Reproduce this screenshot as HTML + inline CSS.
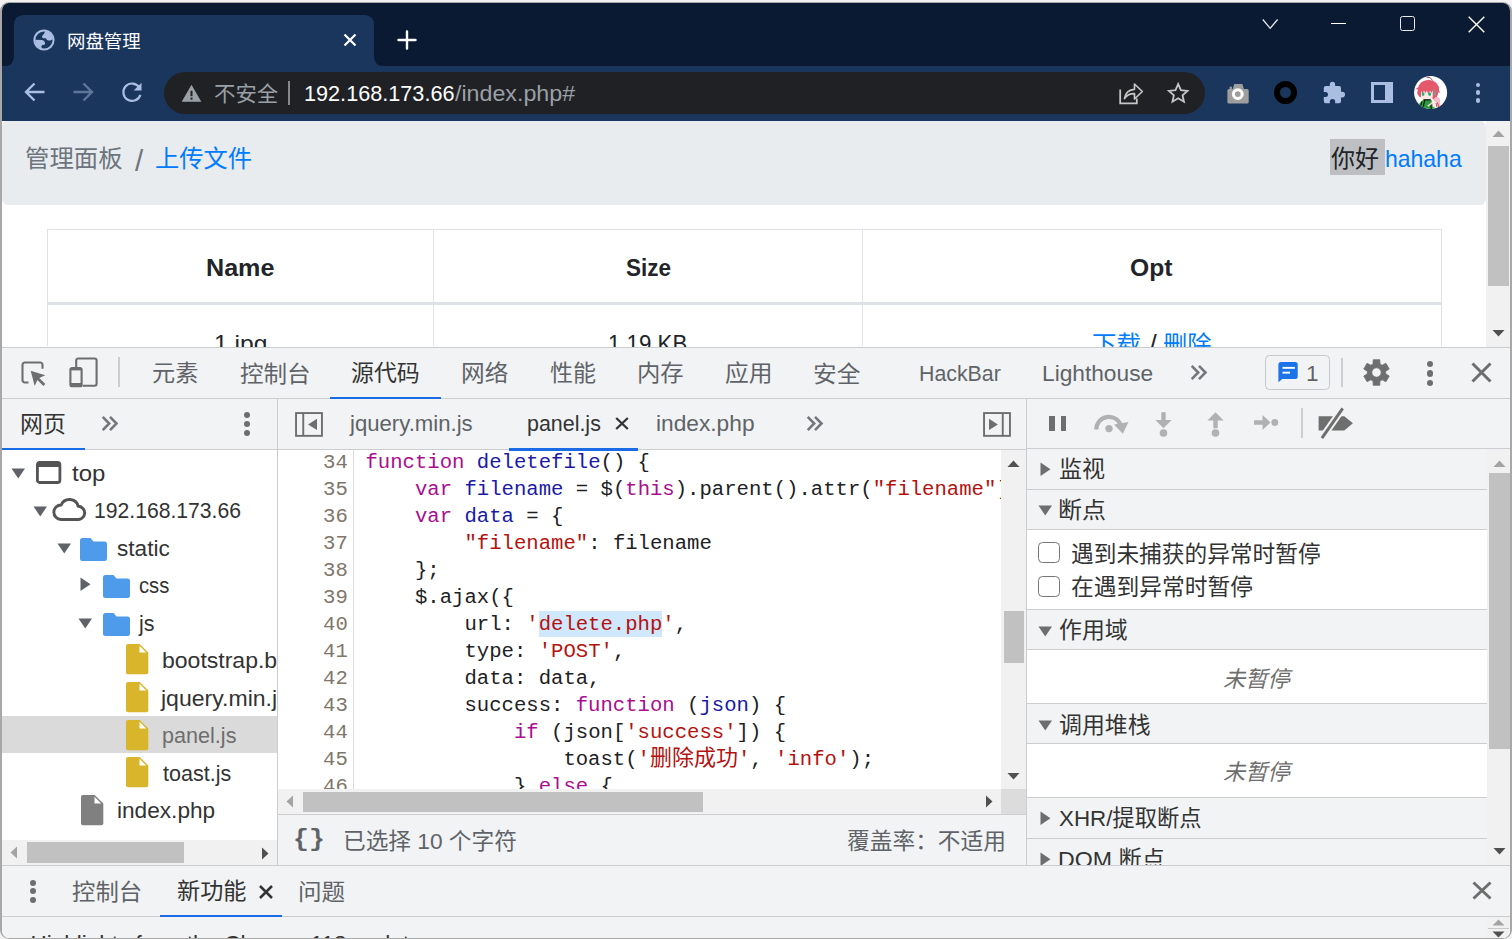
<!DOCTYPE html>
<html lang="zh-CN"><head><meta charset="utf-8"><title>网盘管理</title>
<style>
html,body{margin:0;padding:0;width:1512px;height:939px;overflow:hidden;background:#f2f2f2;}
body{position:relative;font-family:"Liberation Sans","Noto Sans CJK SC",sans-serif;}
.a{position:absolute;}
.t{position:absolute;white-space:nowrap;line-height:1;transform-origin:0 50%;}
.m{font-family:"Liberation Mono","Noto Sans CJK SC",monospace;}
.b{font-weight:bold;}
.bl{display:inline-block;width:0;height:0;}
.i{font-style:italic;}
#win{position:absolute;left:0;top:2px;width:1508px;height:935px;border:1px solid #a8a8a8;border-left-width:2px;border-right-width:2px;border-radius:9px;overflow:hidden;background:#fff;}
#in{position:absolute;left:-2px;top:-3px;width:1512px;height:939px;}
.cj{font-size:22px;line-height:0}
.k{color:#aa0d91}.d{color:#1a1aa6}.s{color:#b5120f}
/*CAL*/
</style></head><body>
<div id="win"><div id="in">
<div class="a" style="left:0px;top:0px;width:1512px;height:66px;background:#0a1a33;"></div>
<div class="a" style="left:0px;top:66px;width:1512px;height:55px;background:#1b365d;"></div>
<svg class="a" style="left:0px;top:15px;" width="400" height="51" viewBox="0 0 400 51"><path d="M2 51 L4 51 Q14 51 14 41 L14 10 Q14 0 24 0 L364 0 Q374 0 374 10 L374 41 Q374 51 384 51 Z" fill="#1b365d"/></svg>
<svg class="a" style="left:33px;top:29px;" width="22" height="22" viewBox="0 0 22 22"><defs><clipPath id="gc"><circle cx="11" cy="11" r="9"/></clipPath></defs><circle cx="11" cy="11" r="10.600" fill="#a9bee1"/><circle cx="11" cy="11" r="8.600" fill="#1b365d"/><g clip-path="url(#gc)" fill="#a9bee1"><path d="M11.700 3.300Q11.500 5 9.700 6.200Q8.800 7.300 9.100 8.300Q9.400 9.100 10.400 9.150L12.700 9.300Q13.300 9.700 13.750 10.700Q14.500 11.500 15.500 11.550L17.500 11.550Q18.500 11.300 19.300 10.600L22 10V0H11.700z"/><path d="M2.500 10.850L8.600 11Q10.300 11.200 11 12Q12 12.900 12.050 14.100Q12.200 15.200 11.800 15.500Q11 15.950 10 15.960Q8.900 16.200 8.600 16.800Q8.300 17.600 8.500 18.200Q8.900 19 9.700 19.400L9.700 22H0V10.850z"/></g></svg>
<span id="tabtitle" class="t " style="left:66.88px;top:33.10px;font-size:18.6px;color:#ffffff;transform:scaleX(0.9890);">网盘管理</span>
<svg class="a" style="left:343px;top:33px;" width="14" height="14" viewBox="0 0 14 14"><path d="M1.5 1.5L12.500 12.500M12.500 1.500L1.500 12.500" stroke="#fff" stroke-width="2.2" fill="none"/></svg>
<svg class="a" style="left:397px;top:30px;" width="20" height="20" viewBox="0 0 20 20"><path d="M10 1.500V18.500M1.500 10H18.500" stroke="#fff" stroke-width="2.4" stroke-linecap="round" fill="none"/></svg>
<svg class="a" style="left:1260px;top:17px;" width="22" height="14" viewBox="0 0 22 14"><path d="M2.800 2.500L10.200 11.300L17.600 2.500" stroke="#e8eaed" stroke-width="1.300" fill="none"/></svg>
<div class="a" style="left:1331px;top:23px;width:15px;height:1.3px;background:#ffffff;"></div>
<div class="a" style="left:1400px;top:16px;width:12.600px;height:13.200px;border:1.300px solid #e8eaed;border-radius:2.500px"></div>
<svg class="a" style="left:1468px;top:16px;" width="17" height="17" viewBox="0 0 17 17"><path d="M.7.7L16.300 16.300M16.300.7L.7 16.300" stroke="#fff" stroke-width="1.400" fill="none"/></svg>
<svg class="a" style="left:24px;top:82px;" width="22" height="20" viewBox="0 0 22 20"><path d="M20.500 10H2.500M10.500 1.500L2 10l8.500 8.500" stroke="#a9bee1" stroke-width="2.400" fill="none"/></svg>
<svg class="a" style="left:72px;top:82px;" width="22" height="20" viewBox="0 0 22 20"><path d="M1.500 10H19.500M11.500 1.500L20 10l-8.500 8.500" stroke="#5f769b" stroke-width="2.400" fill="none"/></svg>
<svg class="a" style="left:120px;top:81px;" width="24" height="23" viewBox="0 0 24 23"><path d="M19.200 6.200A8.700 8.700 0 1 0 20.400 13.800" stroke="#a9bee1" stroke-width="2.200" fill="none"/><path d="M21.500 1.800V9.600H13.700z" fill="#a9bee1"/></svg>
<div class="a" style="left:164px;top:72px;width:1041px;height:42px;border-radius:21px;background:#202124"></div>
<svg class="a" style="left:181px;top:84px;" width="21" height="19" viewBox="0 0 21 19"><path d="M10.500.800L20.300 17.800H.7z" fill="#9aa0a6"/><rect x="9.500" y="6.800" width="2" height="5.400" fill="#202124"/><rect x="9.500" y="13.600" width="2" height="2" fill="#202124"/></svg>
<span id="insecure" class="t " style="left:214.24px;top:82.80px;font-size:21px;color:#9aa0a6;transform:scaleX(1.0192);">不安全</span>
<div class="a" style="left:288px;top:81px;width:2px;height:24px;background:#85888c;"></div>
<span id="urlhost" class="t " style="left:303.80px;top:83.71px;font-size:21.5px;color:#ffffff;transform:scaleX(1.0068);">192.168.173.66</span>
<span id="urlpath" class="t " style="left:454.80px;top:83.71px;font-size:21.5px;color:#9aa0a6;transform:scaleX(1.0800);">/index.php#</span>
<svg class="a" style="left:1119px;top:81.8px;" width="25" height="23" viewBox="0 0 25 23"><path d="M1.200 7.500V21.300H17.800V16.500" stroke="#c4c7c5" stroke-width="1.800" fill="none"/><path d="M5.500 16.500C6.500 10.500 10.500 7.600 15.500 7.300V2L23.300 9.500L15.500 17V11.700C11.500 11.600 8 13 5.500 16.500z" stroke="#c4c7c5" stroke-width="1.700" fill="none" stroke-linejoin="round"/></svg>
<svg class="a" style="left:1166px;top:81px;" width="24" height="24" viewBox="0 0 24 24"><path d="M12 2.200l3 6.800 7.300.7-5.500 4.900 1.600 7.200L12 18l-6.400 3.800 1.600-7.200L1.700 9.700 9 9z" stroke="#c4c7c5" stroke-width="2" fill="none" stroke-linejoin="miter" transform="translate(12.200,11.900) scale(.9) translate(-12,-12)"/></svg>
<svg class="a" style="left:1226px;top:83px;" width="24" height="22" viewBox="0 0 24 22"><path d="M2.900 6H6.700L8.300 .9H16.300L17.900 6H21.200A1.500 1.500 0 0 1 22.700 7.500V19A1.500 1.500 0 0 1 21.200 20.500H2.900A1.500 1.500 0 0 1 1.400 19V7.500A1.500 1.500 0 0 1 2.900 6z" fill="#9e9e9e"/><rect x="3.600" y="3.700" width="2.300" height="3" fill="#9e9e9e"/><circle cx="11.800" cy="11.100" r="4.400" fill="#9e9e9e" stroke="#fff" stroke-width="3.100"/></svg>
<div class="a" style="left:1274px;top:81px;width:11px;height:11px;border:6.500px solid #000;border-radius:50%"></div>
<svg class="a" style="left:1322px;top:80px;" width="25" height="25" viewBox="0 0 25 25"><path d="M3.800 6H7.850V4.450a2.650 2.650 0 0 1 5.300 0V6H17a2 2 0 0 1 2 2V11.800h1.200a2.800 2.800 0 0 1 0 5.600H19V21.200a2 2 0 0 1-2 2H13.150V21.700a2.650 2.650 0 0 0-5.300 0V23.200H3.800a2 2 0 0 1-2-2V17h1.700a2.500 2.500 0 0 0 0-5H1.800V8a2 2 0 0 1 2-2z" fill="#a9bee1"/></svg>
<div class="a" style="left:1371.300px;top:82px;width:10.400px;height:15px;border:3px solid #a9bee1;border-left-width:3.300px;border-right-width:8px"></div>
<svg class="a" style="left:1414px;top:75.9px;" width="34" height="34" viewBox="0 0 34 34"><defs><clipPath id="avc"><circle cx="16.600" cy="16.500" r="16.550"/></clipPath></defs><circle cx="16.600" cy="16.500" r="16.550" fill="#fff"/><g clip-path="url(#avc)"><path d="M12.500 1.200Q16.500 .3 18.700 4.600" fill="none" stroke="#a23a48" stroke-width=".9"/><path d="M1.200 13.200L4.200 11.300Q6 5.500 12 4.300Q19 3.300 23 7.800Q25.500 10.500 25 14L26 17.200L24.300 16.300Q24 19 22.500 21.500L21 25L18.300 22.500L18.500 15L7.500 15L7.200 21.500L5 20.500L3.200 17.500L3.800 13.200z" fill="#e4596c"/><path d="M7 14.500H18.500V20.500Q18.500 23.400 15.500 23.400H10Q7 23.400 7 20.500z" fill="#fdeae2"/><path d="M6.500 13.500L8.500 18L10 14.500L11.300 17.300L12.800 14.500L14.500 18.500L16 14.500L17.500 17L19 13z" fill="#e4596c"/><rect x="7.800" y="16.400" width="2.600" height="3.300" rx="1" fill="#1db37b"/><rect x="14.300" y="16.400" width="2.700" height="3.300" rx="1" fill="#1db37b"/><path d="M19.700 13.500l1.800 1.200.5 3-1 2.500-1.300-1z" fill="#8d8f98"/><path d="M5 28L8.500 24.200L12.500 23.300L17 23.500L20.500 27L20.500 34H7z" fill="#2c9a3d"/><path d="M8 25.500L6.500 30M10.800 24L9 31.500M16.800 27.500L17.300 33" stroke="#0c1a10" stroke-width="1.100"/><path d="M9 23.300h8l-1 1.100H10z" fill="#15171a"/><path d="M17.500 24.500Q19 22.500 20.300 24L22 30L19 31.500z" fill="#fdeae2"/><path d="M13.300 29.500L17.800 26.300L18.600 27.500L14.200 30.700z" fill="#f6d6e0"/><path d="M20 22.300Q22.500 20.300 25 21.500Q26.800 23.500 26 25.500Q27 28 25.800 30.500L23.500 30Q23.200 26.500 20.800 25.500z" fill="#f4bccb"/><path d="M23.300 26.500L25 31.500M22 27L23 31" stroke="#c4383f" stroke-width=".9"/></g></svg>
<div class="a" style="left:1475.600px;top:82.6px;width:4.800px;height:4.800px;border-radius:50%;background:#a9bee1"></div>
<div class="a" style="left:1475.600px;top:90.3px;width:4.800px;height:4.800px;border-radius:50%;background:#a9bee1"></div>
<div class="a" style="left:1475.600px;top:97.89999999999999px;width:4.800px;height:4.800px;border-radius:50%;background:#a9bee1"></div>
<div class="a" style="left:2px;top:121px;width:1508px;height:226px;background:#ffffff;"></div>
<div class="a" style="left:2px;top:121px;width:1484px;height:83.500px;background:#e9ecef;border-radius:5px 6px 6px 6px"></div>
<span id="bc1" class="t " style="left:25.00px;top:147.00px;font-size:24px;color:#6c757d;transform:scaleX(1.0163);">管理面板</span>
<span id="bcsep" class="t " style="left:135.00px;top:146.20px;font-size:29.5px;color:#6c757d;">/</span>
<span id="bc2" class="t " style="left:155.00px;top:147.00px;font-size:24px;color:#007bff;transform:scaleX(1.0106);">上传文件</span>
<div class="a" style="left:1330px;top:139px;width:55px;height:36px;background:#bebfc2;"></div>
<span id="hello" class="t " style="left:1331.00px;top:147.00px;font-size:24px;color:#212529;">你好</span>
<span id="user" class="t " style="left:1384.80px;top:147.21px;font-size:24px;color:#007bff;transform:scaleX(0.9575);">hahaha</span>
<div class="a" style="left:47px;top:229px;width:1395px;height:1px;background:#dee2e6;"></div>
<div class="a" style="left:47px;top:229px;width:1px;height:117px;background:#dee2e6;"></div>
<div class="a" style="left:433px;top:229px;width:1px;height:117px;background:#e1e4e8;"></div>
<div class="a" style="left:862px;top:229px;width:1px;height:117px;background:#e1e4e8;"></div>
<div class="a" style="left:1441px;top:229px;width:1px;height:117px;background:#dee2e6;"></div>
<div class="a" style="left:47px;top:302px;width:1395px;height:3px;background:#dee2e6;"></div>
<span id="thname" class="t b" style="left:206.00px;top:255.71px;font-size:24px;color:#212529;transform:scaleX(1.0465);">Name</span>
<span id="thsize" class="t b" style="left:625.52px;top:255.71px;font-size:24px;color:#212529;transform:scaleX(0.9352);">Size</span>
<span id="thopt" class="t b" style="left:1130.00px;top:255.71px;font-size:24px;color:#212529;transform:scaleX(1.0250);">Opt</span>
<span id="td1" class="t " style="left:213.76px;top:331.81px;font-size:24px;color:#212529;transform:scaleX(1.0256);">1.jpg</span>
<span id="td2" class="t " style="left:608.00px;top:331.81px;font-size:24px;color:#212529;transform:scaleX(0.9288);">1.19 KB</span>
<span id="td3a" class="t " style="left:1091.98px;top:332.60px;font-size:24px;color:#007bff;transform:scaleX(1.0164);">下载</span>
<span id="td3s" class="t " style="left:1149.46px;top:330.80px;font-size:26px;color:#212529;">/</span>
<span id="td3b" class="t " style="left:1162.76px;top:332.60px;font-size:24px;color:#007bff;transform:scaleX(1.0127);">删除</span>
<div class="a" style="left:1486px;top:121px;width:24px;height:226px;background:#f1f1f1;"></div>
<div class="a" style="left:1488px;top:146px;width:21px;height:140px;background:#c1c1c1;"></div>
<svg class="a" style="left:1491px;top:129px;" width="15" height="9" viewBox="0 0 15 9"><path d="M7.500 1.500L13.500 8H1.500z" fill="#a3a3a3"/></svg>
<svg class="a" style="left:1491px;top:329px;" width="15" height="9" viewBox="0 0 15 9"><path d="M7.500 7.500L13.500 1H1.500z" fill="#505050"/></svg>
<div class="a" style="left:2px;top:347px;width:1508px;height:592px;background:#f1f3f4;"></div>
<div class="a" style="left:2px;top:347px;width:1508px;height:1px;background:#cbcdd1;"></div>
<div class="a" style="left:2px;top:398px;width:1508px;height:1px;background:#cbcdd1;"></div>
<svg class="a" style="left:20.6px;top:361px;" width="26" height="26" viewBox="0 0 26 26"><path d="M7.500 21.500H3.700a2.200 2.200 0 0 1-2.200-2.200V3.700a2.200 2.200 0 0 1 2.200-2.200H19.300a2.200 2.200 0 0 1 2.200 2.200V7.800" stroke="#6e6e6e" stroke-width="2.100" fill="none"/><path d="M9.700 9.800L24.300 14.300l-6 2.700 6 6-1.900 1.900-6-6-2.700 6z" fill="#6e6e6e"/></svg>
<svg class="a" style="left:69px;top:357px;" width="30" height="31" viewBox="0 0 30 31"><path d="M7.200 10V3.500a2 2 0 0 1 2-2H25.600a2 2 0 0 1 2 2V26.800a2 2 0 0 1-2 2H13.500" stroke="#6e6e6e" stroke-width="2.100" fill="none"/><rect x="1.400" y="11" width="11.200" height="18.200" rx="1.800" stroke="#6e6e6e" stroke-width="2.100" fill="#f1f3f4"/><rect x="1.400" y="11" width="11.200" height="2.400" fill="#6e6e6e"/><rect x="1.400" y="26" width="11.200" height="3.200" fill="#6e6e6e"/></svg>
<div class="a" style="left:118px;top:357px;width:2px;height:30px;background:#cbcdd1;"></div>
<span id="mt0" class="t " style="left:151.76px;top:363.10px;font-size:22.5px;color:#5f6368;transform:scaleX(1.0281);">元素</span>
<span id="mt1" class="t " style="left:239.76px;top:363.60px;font-size:22.5px;color:#5f6368;transform:scaleX(1.0464);">控制台</span>
<span id="mt2" class="t " style="left:351.04px;top:362.60px;font-size:22.5px;color:#333333;transform:scaleX(1.0180);">源代码</span>
<span id="mt3" class="t " style="left:460.72px;top:363.10px;font-size:22.5px;color:#5f6368;transform:scaleX(1.0525);">网络</span>
<span id="mt4" class="t " style="left:550.00px;top:363.10px;font-size:22.5px;color:#5f6368;transform:scaleX(1.0233);">性能</span>
<span id="mt5" class="t " style="left:637.00px;top:363.10px;font-size:22.5px;color:#5f6368;transform:scaleX(1.0385);">内存</span>
<span id="mt6" class="t " style="left:725.48px;top:363.10px;font-size:22.5px;color:#5f6368;transform:scaleX(1.0573);">应用</span>
<span id="mt7" class="t " style="left:812.80px;top:364.10px;font-size:22.5px;color:#5f6368;transform:scaleX(1.0514);">安全</span>
<span id="mthack" class="t " style="left:918.80px;top:362.81px;font-size:22.5px;color:#5f6368;transform:scaleX(0.9476);">HackBar</span>
<span id="mtlh" class="t " style="left:1042.00px;top:362.81px;font-size:22.5px;color:#5f6368;transform:scaleX(1.0093);">Lighthouse</span>
<div class="a" style="left:330px;top:397px;width:111px;height:2px;background:#1a6ce6;"></div>
<svg class="a" style="left:1189.7px;top:364.2px;" width="19" height="17" viewBox="0 0 19 17"><path d="M1.700 1.900L8.200 8.500L1.700 15.100M9 1.900L15.500 8.500L9 15.100" stroke="#74777b" stroke-width="2.600" fill="none"/></svg>
<div class="a" style="left:1265px;top:355px;width:65px;height:35px;border:1px solid #c6cacd;border-radius:4.500px;box-sizing:border-box"></div>
<svg class="a" style="left:1278px;top:361.9px;" width="20" height="21" viewBox="0 0 20 21"><path d="M2.500 0H17.200A2.500 2.500 0 0 1 19.700 2.500V14.400A2.500 2.500 0 0 1 17.200 16.900H4.200L.4 20.300V2.500A2.500 2.500 0 0 1 2.500 0z" fill="#1a73e8"/><rect x="4.500" y="4.900" width="12.400" height="1.900" fill="#fff"/><rect x="4.500" y="9.700" width="7.500" height="1.900" fill="#fff"/></svg>
<span id="issues1" class="t " style="left:1306.00px;top:362.91px;font-size:22.5px;color:#5f6368;">1</span>
<div class="a" style="left:1341px;top:357.5px;width:2px;height:29.5px;background:#cbcdd1;"></div>
<svg class="a" style="left:1362px;top:357.9px;" width="29" height="29" viewBox="0 0 29 29"><path fill="#6e6e6e" fill-rule="evenodd" stroke="#6e6e6e" stroke-width=".8" stroke-linejoin="round" d="M11.05 5.97L11.19 1.72L17.81 1.72L17.95 5.97L20.16 7.25L23.91 5.25L27.22 10.97L23.61 13.22L23.61 15.78L27.22 18.03L23.91 23.75L20.16 21.75L17.95 23.03L17.81 27.28L11.19 27.28L11.05 23.03L8.84 21.75L5.09 23.75L1.78 18.03L5.39 15.78L5.39 13.22L1.78 10.97L5.09 5.25L8.84 7.25zM14.500 9.800a4.700 4.700 0 1 0 0 9.400 4.700 4.700 0 0 0 0-9.400z"/></svg>
<div class="a" style="left:1426.900px;top:360.75px;width:6.200px;height:6.200px;border-radius:50%;background:#6e6e6e"></div>
<div class="a" style="left:1426.900px;top:370.4px;width:6.200px;height:6.200px;border-radius:50%;background:#6e6e6e"></div>
<div class="a" style="left:1426.900px;top:379.79999999999995px;width:6.200px;height:6.200px;border-radius:50%;background:#6e6e6e"></div>
<svg class="a" style="left:1471px;top:362px;" width="21" height="21" viewBox="0 0 21 21"><path d="M1.500 1.500L19.500 19.500M19.500 1.500L1.500 19.500" stroke="#6e6e6e" stroke-width="3" fill="none"/></svg>
<div class="a" style="left:2px;top:449px;width:1025px;height:1px;background:#cbcdd1;"></div>
<div class="a" style="left:1027px;top:448px;width:483px;height:1px;background:#cbcdd1;"></div>
<span id="nav1" class="t " style="left:19.52px;top:413.65px;font-size:22.5px;color:#333333;transform:scaleX(1.0202);">网页</span>
<svg class="a" style="left:100.5px;top:414.9px;" width="19" height="17" viewBox="0 0 19 17"><path d="M1.700 1.900L8.200 8.500L1.700 15.100M9 1.900L15.500 8.500L9 15.100" stroke="#74777b" stroke-width="2.600" fill="none"/></svg>
<div class="a" style="left:244.300px;top:412px;width:6px;height:6px;border-radius:50%;background:#6e6e6e"></div>
<div class="a" style="left:244.300px;top:421.3px;width:6px;height:6px;border-radius:50%;background:#6e6e6e"></div>
<div class="a" style="left:244.300px;top:430.4px;width:6px;height:6px;border-radius:50%;background:#6e6e6e"></div>
<div class="a" style="left:2px;top:448px;width:83px;height:2px;background:#1a6ce6;"></div>
<div class="a" style="left:277px;top:399px;width:1px;height:466px;background:#cbcdd1;"></div>
<div class="a" style="left:1026px;top:399px;width:1px;height:466px;background:#cbcdd1;"></div>
<svg class="a" style="left:295px;top:412px;" width="28" height="25" viewBox="0 0 28 25"><rect x="1.050" y="1.050" width="25.900" height="22.800" fill="none" stroke="#6e6e6e" stroke-width="1.900"/><path d="M8.250 1V24" stroke="#6e6e6e" stroke-width="1.900"/><path d="M22 6.700V18.100L13.100 12.400z" fill="#6e6e6e"/></svg>
<span id="ft1" class="t " style="left:350.00px;top:413.41px;font-size:22.5px;color:#5f6368;transform:scaleX(0.9840);">jquery.min.js</span>
<span id="ft2" class="t " style="left:527.00px;top:413.41px;font-size:22.5px;color:#333333;transform:scaleX(0.9522);">panel.js</span>
<svg class="a" style="left:614.5px;top:417px;" width="14" height="13" viewBox="0 0 14 13"><path d="M1.200 1L12.800 12M12.800 1L1.200 12" stroke="#333" stroke-width="2.300" fill="none"/></svg>
<span id="ft3" class="t " style="left:655.52px;top:413.41px;font-size:22.5px;color:#5f6368;transform:scaleX(1.0096);">index.php</span>
<svg class="a" style="left:805.6px;top:414.7px;" width="19" height="17" viewBox="0 0 19 17"><path d="M1.700 1.900L8.200 8.500L1.700 15.100M9 1.900L15.500 8.500L9 15.100" stroke="#74777b" stroke-width="2.600" fill="none"/></svg>
<svg class="a" style="left:983px;top:412px;" width="28" height="25" viewBox="0 0 28 25"><rect x="1.050" y="1.050" width="25.900" height="22.800" fill="none" stroke="#6e6e6e" stroke-width="1.900"/><path d="M19.750 1V24" stroke="#6e6e6e" stroke-width="1.900"/><path d="M6 6.700V18.100L14.900 12.400z" fill="#6e6e6e"/></svg>
<div class="a" style="left:1049px;top:416px;width:5.8px;height:15px;background:#6e6e6e;"></div>
<div class="a" style="left:1060.5px;top:416px;width:5.8px;height:15px;background:#6e6e6e;"></div>
<svg class="a" style="left:1093px;top:413px;" width="37" height="21" viewBox="0 0 37 21"><path d="M3.300 16.500A12.600 12.600 0 0 1 27.500 11.500" stroke="#b1b1b1" stroke-width="4.200" fill="none"/><path d="M35.500 9L29.800 20.800L21 11.500z" fill="#b1b1b1"/><circle cx="16" cy="15.600" r="3.700" fill="#b1b1b1"/></svg>
<svg class="a" style="left:1153px;top:410.5px;" width="21" height="26" viewBox="0 0 21 26"><path d="M8.300 1.200h4.400v7.800h5.900L10.500 17.300 2.400 9h5.900z" fill="#b1b1b1"/><circle cx="10.500" cy="22" r="3.800" fill="#b1b1b1"/></svg>
<svg class="a" style="left:1205px;top:410.5px;" width="21" height="26" viewBox="0 0 21 26"><path d="M8.300 17.300h4.400V9.500h5.900L10.500 1.200 2.400 9.500h5.900z" fill="#b1b1b1"/><circle cx="10.500" cy="22" r="3.800" fill="#b1b1b1"/></svg>
<svg class="a" style="left:1253px;top:413px;" width="27" height="19" viewBox="0 0 27 19"><path d="M1 7.300h8.500V2l8 7.500-8 7.500v-5.300H1z" fill="#b1b1b1"/><circle cx="21.800" cy="9.500" r="3.400" fill="#b1b1b1"/></svg>
<div class="a" style="left:1301px;top:408px;width:2px;height:29.5px;background:#cbcdd1;"></div>
<svg class="a" style="left:1317px;top:406px;" width="38" height="35" viewBox="0 0 38 35"><path d="M1.600 10.200H27.300L35.900 17.300 27.300 24.400H1.600z" fill="#6e6e6e"/><path d="M4.200 33L26.300 1.500" stroke="#f1f3f4" stroke-width="7"/><path d="M4.900 32.200L25.700 2.300" stroke="#6e6e6e" stroke-width="3"/></svg>
<div class="a" style="left:2px;top:450px;width:275px;height:390px;background:#ffffff;"></div>
<div class="a" style="left:2px;top:716px;width:275px;height:36.8px;background:#dadada;"></div>
<svg class="a" style="left:11px;top:468px;" width="15" height="11" viewBox="0 0 15 11"><path d="M.5 .5H14L7.250 10.500z" fill="#5f6368"/></svg>
<svg class="a" style="left:35.8px;top:461px;" width="26" height="23" viewBox="0 0 26 23"><rect x="1.400" y="1.400" width="22.500" height="20.100" rx="2.300" fill="none" stroke="#545454" stroke-width="2.800"/><rect x="1.400" y="1.400" width="22.500" height="4.600" fill="#545454"/></svg>
<span id="tr0" class="t " style="left:72.04px;top:462.60px;font-size:22.5px;color:#333333;transform:scaleX(1.0640);">top</span>
<svg class="a" style="left:33px;top:506px;" width="15" height="11" viewBox="0 0 15 11"><path d="M.5 .5H14L7.250 10.500z" fill="#5f6368"/></svg>
<svg class="a" style="left:51px;top:497px;" width="38" height="26" viewBox="0 0 38 26"><path d="M10 22.450A7.250 7.250 0 0 1 10.200 7.950A9 9 0 0 1 27.200 9.300A6.600 6.600 0 0 1 27.850 22.450z" fill="none" stroke="#545454" stroke-width="2.900" stroke-linejoin="round"/></svg>
<span id="tr1" class="t " style="left:94.12px;top:500.10px;font-size:22.5px;color:#333333;transform:scaleX(0.9396);">192.168.173.66</span>
<svg class="a" style="left:56.5px;top:543px;" width="15" height="11" viewBox="0 0 15 11"><path d="M.5 .5H14L7.250 10.500z" fill="#5f6368"/></svg>
<svg class="a" style="left:80.2px;top:538px;" width="27" height="23" viewBox="0 0 27 23"><path d="M2.500 0H10.500L13.500 3.500H24.500A2.500 2.500 0 0 1 27 6V20.500A2.500 2.500 0 0 1 24.500 23H2.500A2.500 2.500 0 0 1 0 20.500V2.500A2.500 2.500 0 0 1 2.500 0z" fill="#4e9aeb"/></svg>
<span id="tr2" class="t " style="left:116.84px;top:537.60px;font-size:22.5px;color:#333333;transform:scaleX(1.0044);">static</span>
<svg class="a" style="left:79.8px;top:577.3px;" width="11" height="15" viewBox="0 0 11 15"><path d="M.5 .5V14L10.500 7.250z" fill="#5f6368"/></svg>
<svg class="a" style="left:103px;top:574.6px;" width="27" height="23" viewBox="0 0 27 23"><path d="M2.500 0H10.500L13.500 3.500H24.500A2.500 2.500 0 0 1 27 6V20.500A2.500 2.500 0 0 1 24.500 23H2.500A2.500 2.500 0 0 1 0 20.500V2.500A2.500 2.500 0 0 1 2.500 0z" fill="#4e9aeb"/></svg>
<span id="tr3" class="t " style="left:138.88px;top:575.10px;font-size:22.5px;color:#333333;transform:scaleX(0.8992);">css</span>
<svg class="a" style="left:78.2px;top:618px;" width="15" height="11" viewBox="0 0 15 11"><path d="M.5 .5H14L7.250 10.500z" fill="#5f6368"/></svg>
<svg class="a" style="left:103px;top:613px;" width="27" height="23" viewBox="0 0 27 23"><path d="M2.500 0H10.500L13.500 3.500H24.500A2.500 2.500 0 0 1 27 6V20.500A2.500 2.500 0 0 1 24.500 23H2.500A2.500 2.500 0 0 1 0 20.500V2.500A2.500 2.500 0 0 1 2.500 0z" fill="#4e9aeb"/></svg>
<span id="tr4" class="t " style="left:138.80px;top:612.60px;font-size:22.5px;color:#333333;transform:scaleX(0.9527);">js</span>
<svg class="a" style="left:126px;top:644.4px;" width="23" height="31" viewBox="0 0 23 31"><path d="M2 0H13.700L22.300 8.600V28.200A2 2 0 0 1 20.300 30.200H2A2 2 0 0 1 0 28.200V2A2 2 0 0 1 2 0z" fill="#d9b52b"/><path d="M13.500 1.800V8.500H20.200z" fill="#fff"/></svg>
<span id="tr5" class="t " style="left:161.80px;top:650.10px;font-size:22.5px;color:#333333;transform:scaleX(1.0230);">bootstrap.b</span>
<svg class="a" style="left:126px;top:682px;" width="23" height="31" viewBox="0 0 23 31"><path d="M2 0H13.700L22.300 8.600V28.200A2 2 0 0 1 20.300 30.200H2A2 2 0 0 1 0 28.200V2A2 2 0 0 1 2 0z" fill="#d9b52b"/><path d="M13.500 1.800V8.500H20.200z" fill="#fff"/></svg>
<span id="tr6" class="t " style="left:160.96px;top:687.60px;font-size:22.5px;color:#333333;transform:scaleX(1.0245);">jquery.min.j</span>
<svg class="a" style="left:126px;top:719.5px;" width="23" height="31" viewBox="0 0 23 31"><path d="M2 0H13.700L22.300 8.600V28.200A2 2 0 0 1 20.300 30.200H2A2 2 0 0 1 0 28.200V2A2 2 0 0 1 2 0z" fill="#d9b52b"/><path d="M13.500 1.800V8.500H20.200z" fill="#fff"/></svg>
<span id="tr7" class="t " style="left:161.80px;top:725.10px;font-size:22.5px;color:#6e6e6e;transform:scaleX(0.9602);">panel.js</span>
<svg class="a" style="left:126px;top:757px;" width="23" height="31" viewBox="0 0 23 31"><path d="M2 0H13.700L22.300 8.600V28.200A2 2 0 0 1 20.300 30.200H2A2 2 0 0 1 0 28.200V2A2 2 0 0 1 2 0z" fill="#d9b52b"/><path d="M13.500 1.800V8.500H20.200z" fill="#fff"/></svg>
<span id="tr8" class="t " style="left:162.80px;top:762.60px;font-size:22.5px;color:#333333;transform:scaleX(0.9573);">toast.js</span>
<svg class="a" style="left:81px;top:794.5px;" width="23" height="31" viewBox="0 0 23 31"><path d="M2 0H13.700L22.300 8.600V28.200A2 2 0 0 1 20.300 30.200H2A2 2 0 0 1 0 28.200V2A2 2 0 0 1 2 0z" fill="#808080"/><path d="M13.500 1.800V8.500H20.200z" fill="#fff"/></svg>
<span id="tr9" class="t " style="left:116.80px;top:800.10px;font-size:22.5px;color:#333333;transform:scaleX(1.0057);">index.php</span>
<div class="a" style="left:2px;top:840px;width:275px;height:25px;background:#f1f1f1;"></div>
<div class="a" style="left:27px;top:842px;width:157px;height:21px;background:#c1c1c1;"></div>
<svg class="a" style="left:9px;top:845px;" width="9" height="15" viewBox="0 0 9 15"><path d="M8 1.500V13.500L1.500 7.500z" fill="#a3a3a3"/></svg>
<svg class="a" style="left:261px;top:845.5px;" width="9" height="15" viewBox="0 0 9 15"><path d="M1 1.500V13.500L7.500 7.500z" fill="#505050"/></svg>
<div class="a" style="left:278px;top:450px;width:748px;height:339px;background:#ffffff;"></div>
<div class="a" style="left:353px;top:450px;width:1px;height:339px;background:#dadce0;"></div>
<div class="a" style="left:509px;top:448px;width:129px;height:3px;background:#1a6ce6;"></div>
<div class="a" style="left:538.5px;top:610.5px;width:123.5px;height:26.5px;background:#cfe8fc;"></div>
<span id="ln34" class="t m" style="left:303.10px;top:453.31px;font-size:20.625px;line-height:1;color:#80766c;width:44.75px;text-align:right">34</span>
<span id="cl34" class="t m" style="left:365.50px;top:453.31px;font-size:20.625px;line-height:1;color:#202124;white-space:pre"><span class="k">function</span> <span class="d">deletefile</span>() {</span>
<span id="ln35" class="t m" style="left:303.10px;top:480.31px;font-size:20.625px;line-height:1;color:#80766c;width:44.75px;text-align:right">35</span>
<span id="cl35" class="t m" style="left:365.50px;top:480.31px;font-size:20.625px;line-height:1;color:#202124;white-space:pre">    <span class="k">var</span> <span class="d">filename</span> = $(<span class="k">this</span>).parent().attr(<span class="s">"filename"</span>);</span>
<span id="ln36" class="t m" style="left:303.10px;top:507.31px;font-size:20.625px;line-height:1;color:#80766c;width:44.75px;text-align:right">36</span>
<span id="cl36" class="t m" style="left:365.50px;top:507.31px;font-size:20.625px;line-height:1;color:#202124;white-space:pre">    <span class="k">var</span> <span class="d">data</span> = {</span>
<span id="ln37" class="t m" style="left:303.10px;top:534.31px;font-size:20.625px;line-height:1;color:#80766c;width:44.75px;text-align:right">37</span>
<span id="cl37" class="t m" style="left:365.50px;top:534.31px;font-size:20.625px;line-height:1;color:#202124;white-space:pre">        <span class="s">"filename"</span>: filename</span>
<span id="ln38" class="t m" style="left:303.10px;top:561.31px;font-size:20.625px;line-height:1;color:#80766c;width:44.75px;text-align:right">38</span>
<span id="cl38" class="t m" style="left:365.50px;top:561.31px;font-size:20.625px;line-height:1;color:#202124;white-space:pre">    };</span>
<span id="ln39" class="t m" style="left:303.10px;top:588.31px;font-size:20.625px;line-height:1;color:#80766c;width:44.75px;text-align:right">39</span>
<span id="cl39" class="t m" style="left:365.50px;top:588.31px;font-size:20.625px;line-height:1;color:#202124;white-space:pre">    $.ajax({</span>
<span id="ln40" class="t m" style="left:303.10px;top:615.31px;font-size:20.625px;line-height:1;color:#80766c;width:44.75px;text-align:right">40</span>
<span id="cl40" class="t m" style="left:365.50px;top:615.31px;font-size:20.625px;line-height:1;color:#202124;white-space:pre">        url: <span class="s">'delete.php'</span>,</span>
<span id="ln41" class="t m" style="left:303.10px;top:642.31px;font-size:20.625px;line-height:1;color:#80766c;width:44.75px;text-align:right">41</span>
<span id="cl41" class="t m" style="left:365.50px;top:642.31px;font-size:20.625px;line-height:1;color:#202124;white-space:pre">        type: <span class="s">'POST'</span>,</span>
<span id="ln42" class="t m" style="left:303.10px;top:669.31px;font-size:20.625px;line-height:1;color:#80766c;width:44.75px;text-align:right">42</span>
<span id="cl42" class="t m" style="left:365.50px;top:669.31px;font-size:20.625px;line-height:1;color:#202124;white-space:pre">        data: data,</span>
<span id="ln43" class="t m" style="left:303.10px;top:696.31px;font-size:20.625px;line-height:1;color:#80766c;width:44.75px;text-align:right">43</span>
<span id="cl43" class="t m" style="left:365.50px;top:696.31px;font-size:20.625px;line-height:1;color:#202124;white-space:pre">        success: <span class="k">function</span> (<span class="d">json</span>) {</span>
<span id="ln44" class="t m" style="left:303.10px;top:723.31px;font-size:20.625px;line-height:1;color:#80766c;width:44.75px;text-align:right">44</span>
<span id="cl44" class="t m" style="left:365.50px;top:723.31px;font-size:20.625px;line-height:1;color:#202124;white-space:pre">            <span class="k">if</span> (json[<span class="s">'success'</span>]) {</span>
<span id="ln45" class="t m" style="left:303.10px;top:750.31px;font-size:20.625px;line-height:1;color:#80766c;width:44.75px;text-align:right">45</span>
<span id="cl45" class="t m" style="left:365.50px;top:750.31px;font-size:20.625px;line-height:1;color:#202124;white-space:pre">                toast(<span class="s">'<span class="cj">删除成功</span>'</span>, <span class="s">'info'</span>);</span>
<span id="ln46" class="t m" style="left:303.10px;top:777.31px;font-size:20.625px;line-height:1;color:#80766c;width:44.75px;text-align:right">46</span>
<span id="cl46" class="t m" style="left:365.50px;top:777.31px;font-size:20.625px;line-height:1;color:#202124;white-space:pre">            } <span class="k">else</span> {</span>
<div class="a" style="left:1001px;top:450px;width:25px;height:339px;background:#f1f1f1;"></div>
<div class="a" style="left:1003.5px;top:611px;width:20.5px;height:52px;background:#c1c1c1;"></div>
<svg class="a" style="left:1005.5px;top:459px;" width="15" height="9" viewBox="0 0 15 9"><path d="M7.500 1.500L13.500 8H1.500z" fill="#505050"/></svg>
<svg class="a" style="left:1005.5px;top:771.5px;" width="15" height="9" viewBox="0 0 15 9"><path d="M7.500 7.500L13.500 1H1.500z" fill="#505050"/></svg>
<div class="a" style="left:278px;top:789px;width:723px;height:25px;background:#f1f1f1;"></div>
<div class="a" style="left:1001px;top:789px;width:25px;height:25px;background:#dcdcdc;"></div>
<div class="a" style="left:303px;top:791.5px;width:400px;height:20.5px;background:#c1c1c1;"></div>
<svg class="a" style="left:285px;top:794px;" width="9" height="15" viewBox="0 0 9 15"><path d="M8 1.500V13.500L1.500 7.500z" fill="#a3a3a3"/></svg>
<svg class="a" style="left:985px;top:794px;" width="9" height="15" viewBox="0 0 9 15"><path d="M1 1.500V13.500L7.500 7.500z" fill="#505050"/></svg>
<div class="a" style="left:278px;top:814px;width:748px;height:51px;background:#f1f3f4;"></div>
<div class="a" style="left:278px;top:814px;width:748px;height:1px;background:#cbcdd1;"></div>
<span id="sb0" class="t m b" style="left:292.94px;top:827.75px;font-size:24.5px;color:#5f6368;transform:scaleX(1.0800);">{}</span>
<span id="sb1" class="t " style="left:342.76px;top:830.75px;font-size:22.5px;color:#5f6368;transform:scaleX(1.0077);">已选择 10 个字符</span>
<span id="sb2" class="t " style="left:847.36px;top:831.25px;font-size:22.5px;color:#5f6368;transform:scaleX(1.0095);">覆盖率：不适用</span>
<div class="a" style="left:1027px;top:449px;width:460px;height:417px;background:#ffffff;"></div>
<div class="a" style="left:1027px;top:449px;width:460px;height:40px;background:#f1f3f4;"></div>
<div class="a" style="left:1027px;top:490px;width:460px;height:39px;background:#f1f3f4;"></div>
<div class="a" style="left:1027px;top:610px;width:460px;height:39px;background:#f1f3f4;"></div>
<div class="a" style="left:1027px;top:704px;width:460px;height:39px;background:#f1f3f4;"></div>
<div class="a" style="left:1027px;top:798px;width:460px;height:40px;background:#f1f3f4;"></div>
<div class="a" style="left:1027px;top:839px;width:460px;height:40px;background:#f1f3f4;"></div>
<div class="a" style="left:1027px;top:489px;width:460px;height:1px;background:#cbcdd1;"></div>
<div class="a" style="left:1027px;top:529px;width:460px;height:1px;background:#cbcdd1;"></div>
<div class="a" style="left:1027px;top:609px;width:460px;height:1px;background:#cbcdd1;"></div>
<div class="a" style="left:1027px;top:649px;width:460px;height:1px;background:#cbcdd1;"></div>
<div class="a" style="left:1027px;top:703px;width:460px;height:1px;background:#cbcdd1;"></div>
<div class="a" style="left:1027px;top:743px;width:460px;height:1px;background:#cbcdd1;"></div>
<div class="a" style="left:1027px;top:797px;width:460px;height:1px;background:#cbcdd1;"></div>
<div class="a" style="left:1027px;top:838px;width:460px;height:1px;background:#cbcdd1;"></div>
<svg class="a" style="left:1039.5px;top:462px;" width="11" height="15" viewBox="0 0 11 15"><path d="M.5 .5V14L10.500 7.250z" fill="#6e6e6e"/></svg>
<span id="sd0" class="t " style="left:1058.76px;top:459.25px;font-size:22.5px;color:#333333;transform:scaleX(1.0234);">监视</span>
<svg class="a" style="left:1038px;top:505px;" width="15" height="11" viewBox="0 0 15 11"><path d="M.5 .5H14L7.250 10.500z" fill="#6e6e6e"/></svg>
<span id="sd1" class="t " style="left:1057.76px;top:500.25px;font-size:22.5px;color:#333333;transform:scaleX(1.0668);">断点</span>
<div class="a" style="left:1038.3px;top:542.2px;width:21.600px;height:21px;box-sizing:border-box;border:1.800px solid #767676;border-radius:4.500px;background:#fff"></div>
<span id="sd2" class="t " style="left:1071.00px;top:543.75px;font-size:22.5px;color:#333333;transform:scaleX(1.0087);">遇到未捕获的异常时暂停</span>
<div class="a" style="left:1038.3px;top:575.8px;width:21.600px;height:21px;box-sizing:border-box;border:1.800px solid #767676;border-radius:4.500px;background:#fff"></div>
<span id="sd3" class="t " style="left:1071.00px;top:576.75px;font-size:22.5px;color:#333333;transform:scaleX(1.0112);">在遇到异常时暂停</span>
<svg class="a" style="left:1038px;top:625.5px;" width="15" height="11" viewBox="0 0 15 11"><path d="M.5 .5H14L7.250 10.500z" fill="#6e6e6e"/></svg>
<span id="sd4" class="t " style="left:1058.76px;top:620.25px;font-size:22.5px;color:#333333;transform:scaleX(1.0170);">作用域</span>
<span id="sd5" class="t i" style="left:1222.52px;top:668.75px;font-size:22.5px;color:#6e6e6e;transform:scaleX(0.9883);">未暂停</span>
<svg class="a" style="left:1038px;top:719.5px;" width="15" height="11" viewBox="0 0 15 11"><path d="M.5 .5H14L7.250 10.500z" fill="#6e6e6e"/></svg>
<span id="sd6" class="t " style="left:1058.76px;top:714.75px;font-size:22.5px;color:#333333;transform:scaleX(1.0175);">调用堆栈</span>
<span id="sd7" class="t i" style="left:1222.52px;top:761.75px;font-size:22.5px;color:#6e6e6e;transform:scaleX(0.9883);">未暂停</span>
<svg class="a" style="left:1039.5px;top:810.5px;" width="11" height="15" viewBox="0 0 11 15"><path d="M.5 .5V14L10.500 7.250z" fill="#6e6e6e"/></svg>
<span id="sd8" class="t " style="left:1058.76px;top:808.25px;font-size:22.5px;color:#333333;transform:scaleX(0.9926);">XHR/提取断点</span>
<svg class="a" style="left:1039.5px;top:852px;" width="11" height="15" viewBox="0 0 11 15"><path d="M.5 .5V14L10.500 7.250z" fill="#6e6e6e"/></svg>
<span id="sd9" class="t " style="left:1057.76px;top:849.25px;font-size:22.5px;color:#333333;transform:scaleX(1.0297);">DOM 断点</span>
<div class="a" style="left:1487px;top:449px;width:23px;height:417px;background:#f1f1f1;"></div>
<div class="a" style="left:1489px;top:472.5px;width:21px;height:276px;background:#c1c1c1;"></div>
<svg class="a" style="left:1491.5px;top:458.5px;" width="15" height="9" viewBox="0 0 15 9"><path d="M7.500 1.500L13.500 8H1.500z" fill="#a3a3a3"/></svg>
<svg class="a" style="left:1491.5px;top:847px;" width="15" height="9" viewBox="0 0 15 9"><path d="M7.500 7.500L13.500 1H1.500z" fill="#505050"/></svg>
<div class="a" style="left:2px;top:865px;width:1508px;height:75px;background:#f1f3f4;"></div>
<div class="a" style="left:2px;top:865px;width:1508px;height:1px;background:#cbcdd1;"></div>
<div class="a" style="left:2px;top:916px;width:1508px;height:1px;background:#cbcdd1;"></div>
<div class="a" style="left:29.500px;top:879.5px;width:6px;height:6px;border-radius:50%;background:#6e6e6e"></div>
<div class="a" style="left:29.500px;top:888.3px;width:6px;height:6px;border-radius:50%;background:#6e6e6e"></div>
<div class="a" style="left:29.500px;top:897.2px;width:6px;height:6px;border-radius:50%;background:#6e6e6e"></div>
<span id="dr0" class="t " style="left:71.80px;top:881.75px;font-size:22.5px;color:#5f6368;transform:scaleX(1.0392);">控制台</span>
<span id="dr1" class="t " style="left:176.52px;top:881.25px;font-size:22.5px;color:#333333;transform:scaleX(1.0292);">新功能</span>
<svg class="a" style="left:258.5px;top:884.5px;" width="14" height="14" viewBox="0 0 14 14"><path d="M1 1L13 13M13 1L1 13" stroke="#333" stroke-width="2.500" fill="none"/></svg>
<span id="dr2" class="t " style="left:298.00px;top:881.75px;font-size:22.5px;color:#5f6368;transform:scaleX(1.0476);">问题</span>
<div class="a" style="left:160px;top:915px;width:122px;height:2px;background:#1a6ce6;"></div>
<svg class="a" style="left:1471.5px;top:881px;" width="20" height="19" viewBox="0 0 20 19"><path d="M1.500 1.500L18.500 17.500M18.500 1.500L1.500 17.500" stroke="#6e6e6e" stroke-width="3" fill="none"/></svg>
<div class="a" style="left:2px;top:917px;width:1485px;height:21px;overflow:hidden"><span class="t" style="left:28.500px;top:15.900px;font-size:22.500px;color:#333">Highlights from the Chrome 113 update</span></div>
<div class="a" style="left:1486px;top:917px;width:24px;height:21px;background:#f1f1f1;"></div>
<svg class="a" style="left:1492px;top:919.2px;" width="13" height="7" viewBox="0 0 13 7"><path d="M6.500 .5L12.500 6.500H.5z" fill="#a3a3a3"/></svg>
<div class="a" style="left:1488px;top:928px;width:21px;height:1px;background:#c8c8c8;"></div>
<svg class="a" style="left:1492px;top:930.5px;" width="13" height="7" viewBox="0 0 13 7"><path d="M6.500 6.500L12.500 .5H.5z" fill="#505050"/></svg>
</div></body></html>
